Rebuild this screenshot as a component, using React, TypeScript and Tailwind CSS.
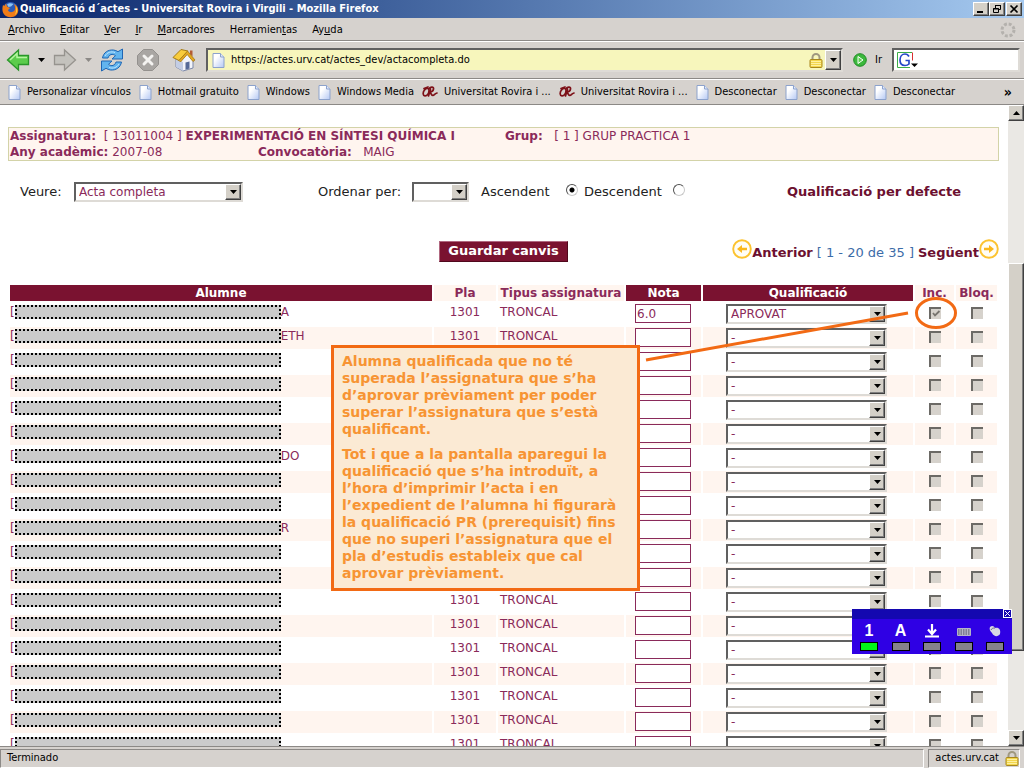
import { useState } from 'react'
import type { ReactNode } from 'react'

interface Row {
  tail?: string
  nota?: string
  qualificacio?: string
  inc?: boolean
}

const ROWS: Row[] = Array.from({ length: 19 }, (_, i) => {
  if (i === 0) return { tail: 'A', nota: '6.0', qualificacio: 'APROVAT', inc: true }
  if (i === 1) return { tail: 'ETH' }
  if (i === 6) return { tail: 'DO' }
  if (i === 9) return { tail: 'R' }
  return {}
})

const BOOKMARKS = [
  { label: 'Personalizar vínculos' },
  { label: 'Hotmail gratuito' },
  { label: 'Windows' },
  { label: 'Windows Media' },
  { label: 'Universitat Rovira i ...', urv: true },
  { label: 'Universitat Rovira i ...', urv: true },
  { label: 'Desconectar' },
  { label: 'Desconectar' },
  { label: 'Desconectar' },
]

const RAISED = 'border border-t-white border-l-white border-r-[#404040] border-b-[#404040] bg-[#d4d0c8] shadow-[inset_-1px_-1px_0_#808080]'
const SUNKEN = 'border-2 border-t-[#606060] border-l-[#606060] border-r-[#dedbd6] border-b-[#dedbd6]'

function Caret({ className = '' }: { className?: string }) {
  return (
    <svg width="7" height="4" viewBox="0 0 7 4" className={className} aria-hidden="true">
      <path d="M0 0h7L3.500 4z" fill="currentColor" />
    </svg>
  )
}

function PageIcon() {
  return (
    <svg width="13" height="15" viewBox="0 0 13 15" className="shrink-0" aria-hidden="true">
      <defs>
        <linearGradient id="paper" x1="0" y1="0" x2="1" y2="1">
          <stop offset="0.3" stopColor="#ffffff" />
          <stop offset="1" stopColor="#b4c8f4" />
        </linearGradient>
      </defs>
      <path d="M1 .5h7.500l3.500 3.500v10.500H1z" fill="url(#paper)" stroke="#8ca2cc" />
      <path d="M8.500 .5v3.500H12" fill="#dfe8fb" stroke="#8ca2cc" />
    </svg>
  )
}

function UrvIcon() {
  return (
    <svg width="16" height="12" viewBox="0 0 16 12" className="shrink-0" fill="none" stroke="#7d1118" strokeWidth="1.700" strokeLinecap="round" aria-hidden="true">
      <path d="M5.500 2.500C3 2.500 1 5.500 1.200 8c.2 2.500 3 2.500 4.500.5C7.500 6 7.500 2.500 5.500 2.500zM2 2.500 6 1" />
      <path d="M7 2.500C8.500.5 12 .5 11.500 3c-.3 2-2.500 3-4.500 3 2 0 2 3.500 4 3.500 1.200 0 1.500-2 4-2.500M8.500 3 6.500 10" />
    </svg>
  )
}

function LockIcon() {
  return (
    <svg width="14" height="15" viewBox="0 0 14 15" className="shrink-0" aria-hidden="true">
      <path d="M3.500 7V4.500a3.500 3.500 0 0 1 7 0V7" fill="none" stroke="#a09880" strokeWidth="2" />
      <rect x="1" y="6.500" width="12" height="8" rx="1" fill="#f3d64c" stroke="#a8871c" />
      <path d="M2 8.500h10M2 10.500h10M2 12.500h10" stroke="#fdf0a0" />
    </svg>
  )
}

function ArrowIcon({ forward }: { forward?: boolean }) {
  return (
    <svg width="24" height="24" viewBox="0 0 24 24" aria-hidden="true">
      {forward ? (
        <path d="M1.500 7.500h10V2l11 10-11 10v-5.500h-10z" fill="#c4c2bd" stroke="#96938e" strokeWidth="1.300" />
      ) : (
        <>
          <path d="M22.500 7.500h-10V2l-11 10 11 10v-5.500h10z" fill="#5ccc4c" stroke="#2a962a" strokeWidth="1.300" />
          <path d="M21 9.500H11V5.500L4 12" fill="none" stroke="#b4f4a0" strokeWidth="1.500" />
        </>
      )}
    </svg>
  )
}

function ReloadIcon() {
  return (
    <svg width="24" height="24" viewBox="0 0 24 24" fill="#62b4ee" stroke="#1f66b4" strokeLinejoin="round" aria-hidden="true">
      <path d="M2.500 10C3.500 4.500 8 1.500 13.500 2c1.500.2 3.200.8 4.500 1.700L22.500 1v10H12l3.500-3.300C12.500 5.200 9 6.500 8 10z" />
      <path d="M21.500 14c-1 5.500-5.500 8.500-11 8-1.500-.2-3.200-.8-4.500-1.700L1.500 23V13H12l-3.500 3.300c3 2.500 6.500 1.200 7.500-2.300z" />
      <path d="M5 8C7 4.500 11 3 15 4.500M19 16c-2 3.500-6 5-10 3.500" fill="none" stroke="#bfe4ff" />
    </svg>
  )
}

function StopIcon() {
  return (
    <svg width="24" height="24" viewBox="0 0 24 24" aria-hidden="true">
      <path d="M7.500 1.500h9l6 6v9l-6 6h-9l-6-6v-9z" fill="#a9a6a3" stroke="#94918e" />
      <path d="m8 8 8 8M16 8l-8 8" stroke="#f4f3f1" strokeWidth="3" strokeLinecap="round" />
    </svg>
  )
}

function HomeIcon() {
  return (
    <svg width="24" height="24" viewBox="0 0 24 24" aria-hidden="true">
      <path d="M4 11v8l7 4 10-3v-9l-6-7z" fill="#f2f4fa" stroke="#7c88a8" />
      <path d="M4 11v8l7 4v-9z" fill="#c3cde4" />
      <path d="M18 2.500h2.500v6L18 6z" fill="#b45c34" />
      <path d="M1 9.500 9 1.500l7 1.500L7 12.500z" fill="#f8cc3c" stroke="#a47a14" />
      <path d="M7 12.500 15.500 3l7.500 9-2 1.500-5.800-7L8.500 14z" fill="#e4a820" stroke="#a47a14" strokeWidth=".8" />
      <path d="M13.500 14.500l4-1v7l-4 1.200z" fill="#566a98" />
    </svg>
  )
}

function CircleArrow({ forward }: { forward?: boolean }) {
  return (
    <svg width="20" height="20" viewBox="0 0 20 20" aria-hidden="true">
      <circle cx="10" cy="10" r="8.800" fill="#fffdf5" stroke="#fcc330" strokeWidth="1.900" />
      <path d={forward ? 'M5 8.800h5V6l5 4-5 4v-2.800H5z' : 'M15 8.800h-5V6l-5 4 5 4v-2.800h5z'} fill="#fbb81c" />
    </svg>
  )
}

function FirefoxIcon() {
  return (
    <svg width="17" height="17" viewBox="0 0 17 17" className="shrink-0" aria-hidden="true">
      <circle cx="8.500" cy="8.500" r="7.500" fill="#2c5cb8" />
      <path d="M5 3.500c2-2 5-1.500 6.500-.5L9 5.500 6.500 6z" fill="#8cc4f4" />
      <path d="M1 4l1.500 1L4 2.500 5 5.500l3 1.500-2 2c.5 2.500 4.500 3 6.500.5 1-1.500.8-4-.5-6.500 5 2.500 5.500 8 2 11.300-3.500 3-9 2.500-11.800-.8C.2 11.500 0 7.500 1 4z" fill="#f07c18" />
      <path d="M14 5c2 3 1.500 7-1 9 1-2.500 1.500-5.500 1-9z" fill="#fcd040" />
    </svg>
  )
}

function WindowButton({ label, children }: { label: string; children: ReactNode }) {
  return (
    <button aria-label={label} className={`flex h-[14px] w-4 items-center justify-center ${RAISED}`}>
      <svg width="10" height="10" viewBox="0 0 10 10" fill="none" stroke="#000" aria-hidden="true">{children}</svg>
    </button>
  )
}

interface SelectProps {
  label: string
  id?: string
  options: string[]
  className?: string
}

function Select({ label, id, options, className = '' }: SelectProps) {
  return (
    <div className={`relative h-5 bg-white ${SUNKEN} ${className}`}>
      <select id={id} aria-label={label} className="block h-4 w-full appearance-none bg-white pl-[3px] text-xs leading-4 text-[#8a2a5a] outline-none">
        {options.map(opt => <option key={opt}>{opt}</option>)}
      </select>
      <span className={`pointer-events-none absolute top-0 right-0 flex h-4 w-4 items-center justify-center text-black ${RAISED}`}>
        <Caret />
      </span>
    </div>
  )
}

function Check({ label, checked = false }: { label: string; checked?: boolean }) {
  return (
    <span className="relative mx-auto mt-1 block h-3 w-3">
      <input
        type="checkbox"
        aria-label={label}
        defaultChecked={checked}
        disabled
        className="block h-3 w-3 appearance-none border-t-2 border-l-2 border-[#6c6a66] bg-[#d6d2cc]"
      />
      {checked && (
        <svg width="12" height="12" viewBox="0 0 12 12" className="absolute top-0 left-0" aria-hidden="true">
          <path d="m4 6 2 2.500L10.500 4" fill="none" stroke="#77746f" strokeWidth="1.800" />
        </svg>
      )}
    </span>
  )
}

function Radio({ id, checked, onChange }: { id: string; checked: boolean; onChange: () => void }) {
  return (
    <input
      id={id}
      type="radio"
      name="ordre"
      checked={checked}
      onChange={onChange}
      className="mb-1 h-3 w-3 appearance-none rounded-full border border-t-[#505050] border-r-[#c8c8c8] border-b-[#c8c8c8] border-l-[#505050] bg-white checked:bg-[radial-gradient(circle,#000_0,#000_2px,#fff_3px)]"
    />
  )
}

function Chrome() {
  return (
    <header className="shrink-0 bg-[#d6d2ce] font-['DejaVu_Sans_Condensed','DejaVu_Sans',sans-serif] text-[11px] text-black">
      <div className="flex h-[18px] items-center gap-[1px] bg-linear-to-r from-[#0a246a] to-[#a6caf0] px-[2px]">
        <FirefoxIcon />
        <h1 className="flex-1 font-bold whitespace-nowrap text-white">Qualificació d´actes - Universitat Rovira i Virgili - Mozilla Firefox</h1>
        <div className="flex">
          <WindowButton label="Minimizar"><path d="M1 8h6" strokeWidth="2" /></WindowButton>
          <WindowButton label="Restaurar">
            <path d="M3.500 4V1.500h5v4H7M3 1.500h6M1.500 4.500h5v4h-5zM1 5h6" />
          </WindowButton>
        </div>
        <WindowButton label="Cerrar"><path d="m1.500 1.500 7 7M8.500 1.500l-7 7" strokeWidth="1.700" /></WindowButton>
      </div>

      <nav className="flex h-[23px] items-center gap-[15px] border-b border-[#8c8986] px-2 pt-[2px]">
        <button><u>A</u>rchivo</button>
        <button><u>E</u>ditar</button>
        <button><u>V</u>er</button>
        <button><u>I</u>r</button>
        <button><u>M</u>arcadores</button>
        <button>Herramien<u>t</u>as</button>
        <button>Ay<u>u</u>da</button>
        <svg width="16" height="16" viewBox="0 0 16 16" className="ml-auto" aria-hidden="true">
          <circle cx="8" cy="8" r="6" fill="none" stroke="#b4b1ad" strokeWidth="3" strokeDasharray="2.900 1.810" />
        </svg>
      </nav>

      <div className="flex h-[38px] items-center border-t border-b border-t-white border-b-[#8c8986] pr-1 pl-[6px]">
        <button aria-label="Atrás"><ArrowIcon /></button>
        <button aria-label="Historial atrás" className="px-2"><Caret /></button>
        <button aria-label="Adelante"><ArrowIcon forward /></button>
        <button aria-label="Historial adelante" className="px-2 text-[#8c8986]"><Caret /></button>
        <button aria-label="Recargar"><ReloadIcon /></button>
        <button aria-label="Detener" className="ml-3"><StopIcon /></button>
        <button aria-label="Inicio" className="ml-3"><HomeIcon /></button>
        <div className={`ml-[10px] flex h-6 flex-1 items-center bg-[#f7f6bc] pl-1 ${SUNKEN}`}>
          <PageIcon />
          <input aria-label="Dirección" defaultValue="https://actes.urv.cat/actes_dev/actacompleta.do" className="ml-[6px] min-w-0 flex-1 bg-transparent outline-none" />
          <LockIcon />
          <button aria-label="Mostrar historial" className={`ml-[2px] flex h-5 w-4 items-center justify-center ${RAISED}`}><Caret /></button>
        </div>
        <button className="ml-[10px] flex items-center gap-2">
          <svg width="14" height="14" viewBox="0 0 14 14" aria-hidden="true">
            <circle cx="7" cy="7" r="6.300" fill="#3cb83c" stroke="#1e8a24" />
            <path d="m5 3.500 5 3.500-5 3.500z" fill="#5cd050" stroke="#fff" />
          </svg>
          Ir
        </button>
        <div className={`ml-[10px] flex h-6 w-32 items-center bg-white pl-[3px] ${SUNKEN}`}>
          <svg width="22" height="18" viewBox="0 0 22 18" className="shrink-0" fill="none" aria-hidden="true">
            <path d="M.5 16.500V1.500H15" stroke="#3cae48" />
            <path d="M15.500 1.500v8" stroke="#d83030" />
            <path d="M.5 16.500H13" stroke="#3cae48" />
            <path d="M12 5.500C11 3.500 9.500 3 8 3 5 3 3 5.500 3 9s2 5.500 5 5.500c1.500 0 3-.5 4-1.500V9.500H8.500" stroke="#2448c8" strokeWidth="1.700" />
            <path d="M14 12.500h7L17.500 16z" fill="#000" />
          </svg>
          <input aria-label="Buscar" className="min-w-0 flex-1 bg-transparent outline-none" />
        </div>
      </div>

      <div className="flex h-[26px] items-center gap-2 border-t border-b border-t-white border-b-[#8c8986] px-2">
        {BOOKMARKS.map((b, i) => (
          <a key={i} href="#" className="flex items-center gap-[6px] whitespace-nowrap">
            {b.urv ? <UrvIcon /> : <PageIcon />}
            {b.label}
          </a>
        ))}
        <button aria-label="Más marcadores" className="mr-1 ml-auto text-sm font-bold">»</button>
      </div>
    </header>
  )
}

function Subject() {
  return (
    <section className="border border-[#d3d3a8] bg-[#fff5ef] px-[1px] text-xs leading-4 text-[#8a2a5a]">
      <div className="flex">
        <p className="w-[495px] whitespace-nowrap"><b>Assignatura:</b>&nbsp; [ 13011004 ] <b>EXPERIMENTACIÓ EN SÍNTESI QUÍMICA I</b></p>
        <p><b>Grup:</b> &nbsp; [ 1 ] GRUP PRACTICA 1</p>
      </div>
      <div className="flex">
        <p className="w-[248px]"><b>Any acadèmic:</b> 2007-08</p>
        <p><b>Convocatòria:</b> &nbsp; MAIG</p>
      </div>
    </section>
  )
}

function Filters() {
  const [order, setOrder] = useState('asc')
  return (
    <div className="mt-[21px] flex items-center pl-3 text-[13px] text-[#222]">
      <label htmlFor="veure" className="w-[54px]">Veure:</label>
      <Select id="veure" label="Veure" options={['Acta completa', 'Pendents']} className="w-[169px]" />
      <label htmlFor="ordenar" className="ml-[75px] w-[94px] whitespace-nowrap">Ordenar per:</label>
      <Select id="ordenar" label="Ordenar per" options={['', 'Nom']} className="w-[57px]" />
      <label htmlFor="asc" className="ml-3 w-[85px]">Ascendent</label>
      <Radio id="asc" checked={order === 'asc'} onChange={() => setOrder('asc')} />
      <label htmlFor="desc" className="ml-[6px] w-[89px]">Descendent</label>
      <Radio id="desc" checked={order === 'desc'} onChange={() => setOrder('desc')} />
      <a href="#" className="mr-[38px] ml-auto font-bold whitespace-nowrap text-[#6c1030]">Qualificació per defecte</a>
    </div>
  )
}

function Actions() {
  return (
    <div className="mt-[37px] flex h-6 items-center text-[13px]">
      <div className="flex-1" />
      <button className="h-[21px] border border-t-[#b06880] border-r-[#50081c] border-b-[#50081c] border-l-[#b06880] bg-[#7a1230] px-2 leading-4 font-bold whitespace-nowrap text-white">Guardar canvis</button>
      <div className="flex flex-1 justify-end whitespace-nowrap text-[#3c6ca8]">
        <a href="#" className="flex items-start font-bold text-[#6c1030]"><CircleArrow /><span className="pt-1">Anterior</span></a>
        <span className="px-1 pt-1">[ 1 - 20 de 35 ]</span>
        <a href="#" className="flex items-start font-bold text-[#6c1030]"><span className="pt-1">Següent</span><CircleArrow forward /></a>
      </div>
    </div>
  )
}

function Grades() {
  const dark = 'bg-[#7a1230] text-white'
  const light = 'bg-[#fff5ef] text-[#8a2a5a]'
  return (
    <table className="mt-5 w-full table-fixed border-separate border-spacing-[2px] text-xs text-[#8a2a5a]">
      <colgroup>
        <col />
        <col className="w-[62px]" />
        <col className="w-[126px]" />
        <col className="w-[75px]" />
        <col className="w-[210px]" />
        <col className="w-[39px]" />
        <col className="w-[41px]" />
      </colgroup>
      <thead>
        <tr className="h-4 leading-4 whitespace-nowrap">
          <th className={`p-0 ${dark}`}>Alumne</th>
          <th className={`p-0 ${light}`}>Pla</th>
          <th className={`p-0 ${light}`}>Tipus assignatura</th>
          <th className={`p-0 ${dark}`}>Nota</th>
          <th className={`p-0 ${dark}`}>Qualificació</th>
          <th className={`p-0 ${light}`}>Inc.</th>
          <th className={`p-0 ${light}`}>Bloq.</th>
        </tr>
      </thead>
      <tbody>
        {ROWS.map((row, i) => (
          <tr key={i} className="h-[22px] align-top leading-4 [&:nth-child(even)>td]:bg-[#fff5ef]">
            <td className="p-0">
              <div className="flex h-[18px] items-center">
                <span>[</span>
                <span className="h-[14px] w-[266px] border-2 border-dotted border-black bg-[#cbcbcb]" />
                {row.tail && <span>{row.tail}</span>}
              </div>
            </td>
            <td className="p-0 pt-[1px] text-center">1301</td>
            <td className="p-0 pt-[1px] pl-[2px]">TRONCAL</td>
            <td className="p-0 pt-[1px]">
              <input aria-label={`Nota ${i + 1}`} defaultValue={row.nota} className="ml-[9px] block h-[19px] w-14 border border-[#8a2a5a] bg-white px-[1px] text-xs outline-none" />
            </td>
            <td className="p-0 pt-[1px]">
              <Select label={`Qualificació ${i + 1}`} options={row.qualificacio ? [row.qualificacio, '-'] : ['-', 'APROVAT']} className="ml-[23px] w-[161px]" />
            </td>
            <td className="p-0"><Check label={`Inc. ${i + 1}`} checked={row.inc} /></td>
            <td className="p-0"><Check label={`Bloq. ${i + 1}`} /></td>
          </tr>
        ))}
      </tbody>
    </table>
  )
}

function Callout() {
  return (
    <>
      <div className="absolute top-[240px] left-[331px] w-[309px] border-3 border-[#f26a14] bg-[#fbead4] px-2 pt-[5px] pb-[6px] text-sm leading-[17px] font-bold whitespace-nowrap text-[#f79433]">
        <p>
          Alumna qualificada que no té<br />
          superada l’assignatura que s’ha<br />
          d’aprovar prèviament per poder<br />
          superar l’assignatura que s’està<br />
          qualificant.
        </p>
        <p className="mt-2">
          Tot i que a la pantalla aparegui la<br />
          qualificació que s’ha introduït, a<br />
          l’hora d’imprimir l’acta i en<br />
          l’expedient de l’alumna hi figurarà<br />
          la qualificació PR (prerequisit) fins<br />
          que no superi l’assignatura que el<br />
          pla d’estudis estableix que cal<br />
          aprovar prèviament.
        </p>
      </div>
      <svg width="316" height="68" viewBox="0 0 316 68" className="pointer-events-none absolute top-[190px] left-[644px]" fill="none" stroke="#f26a14" strokeWidth="3" aria-hidden="true">
        <path d="M2 65 264 18" />
        <ellipse cx="292" cy="18" rx="19.500" ry="14.500" />
      </svg>
    </>
  )
}

function Scrollbar() {
  return (
    <div className="flex w-4 shrink-0 flex-col bg-[#eae8e4]">
      <button aria-label="Subir" className={`flex h-4 items-center justify-center ${RAISED}`}><Caret className="rotate-180" /></button>
      <div className="flex-142" />
      <div className={`flex-388 ${RAISED}`} />
      <div className="flex-79" />
      <button aria-label="Bajar" className={`flex h-4 items-center justify-center ${RAISED}`}><Caret /></button>
    </div>
  )
}

const KEYS = [
  { name: 'Bloq Num', on: true, text: '1' },
  { name: 'Mayúsculas', text: 'A' },
  { name: 'Desplazamiento', icon: <path d="M8 1v9M4 6.500 8 11l4-4.500M1 13.500h14" fill="none" stroke="#fff" strokeWidth="2.200" /> },
  {
    name: 'Teclado',
    icon: (
      <>
        <rect x="1" y="5" width="14" height="8" rx="1" fill="#b4b4c8" />
        <path d="M2 7h12M2 9h12M2 11h12" stroke="#4c4c64" strokeDasharray="1.500 1" />
      </>
    ),
  },
  {
    name: 'Ratón',
    icon: (
      <>
        <path d="M3 4c2-2 4-1 5 1 4-1 6 2 5 6-2 3-6 3-8-1-2-2-3-4-2-6z" fill="#d8d8e4" />
        <path d="M4 7c1-2 2-2 4-2" stroke="#6c6c84" fill="none" />
      </>
    ),
  },
]

function KeyPanel() {
  return (
    <aside className="absolute top-[609px] right-3 w-40 bg-[#2f00e4] pb-[3px] font-['Liberation_Sans',Arial,sans-serif]">
      <div className="flex h-[10px] justify-end bg-[#1408b0]">
        <button aria-label="Cerrar panel" className="h-[9px] w-[9px] border border-white">
          <svg width="7" height="7" viewBox="0 0 7 7" aria-hidden="true"><path d="m1 1 5 5M6 1 1 6" stroke="#fff" /></svg>
        </button>
      </div>
      <div className="flex justify-between px-2 pt-1">
        {KEYS.map(k => (
          <button key={k.name} aria-label={k.name} className="flex w-[18px] flex-col items-center gap-[3px]">
            {k.text
              ? <span className="h-4 text-base leading-4 font-bold text-white">{k.text}</span>
              : <svg width="16" height="16" viewBox="0 0 16 16" aria-hidden="true">{k.icon}</svg>}
            <span className={`h-[9px] w-[18px] border border-black ${k.on ? 'bg-[#00f818]' : 'bg-[#86828c]'}`} />
          </button>
        ))}
      </div>
    </aside>
  )
}

export default function App() {
  return (
    <div className="relative flex h-screen flex-col overflow-hidden bg-white font-['DejaVu_Sans',Verdana,sans-serif]">
      <Chrome />
      <div className="flex min-h-0 flex-1">
        <main className="relative min-w-0 flex-1 overflow-hidden pt-[22px] pr-[9px] pl-2">
          <Subject />
          <Filters />
          <Actions />
          <Grades />
          <Callout />
        </main>
        <Scrollbar />
      </div>
      <footer className="flex h-[22px] shrink-0 items-stretch gap-1 border-t border-[#8c8986] bg-[#d6d2ce] pt-[2px] pr-1 font-['DejaVu_Sans_Condensed','DejaVu_Sans',sans-serif] text-[11px] text-black">
        <p className="flex flex-1 items-center border border-t-[#8c8986] border-r-white border-b-white border-l-[#8c8986] pl-[6px]">Terminado</p>
        <p className="flex items-center gap-[6px] border border-t-[#8c8986] border-r-white border-b-white border-l-[#8c8986] pl-[6px]">actes.urv.cat <LockIcon /></p>
      </footer>
      <KeyPanel />
    </div>
  )
}
